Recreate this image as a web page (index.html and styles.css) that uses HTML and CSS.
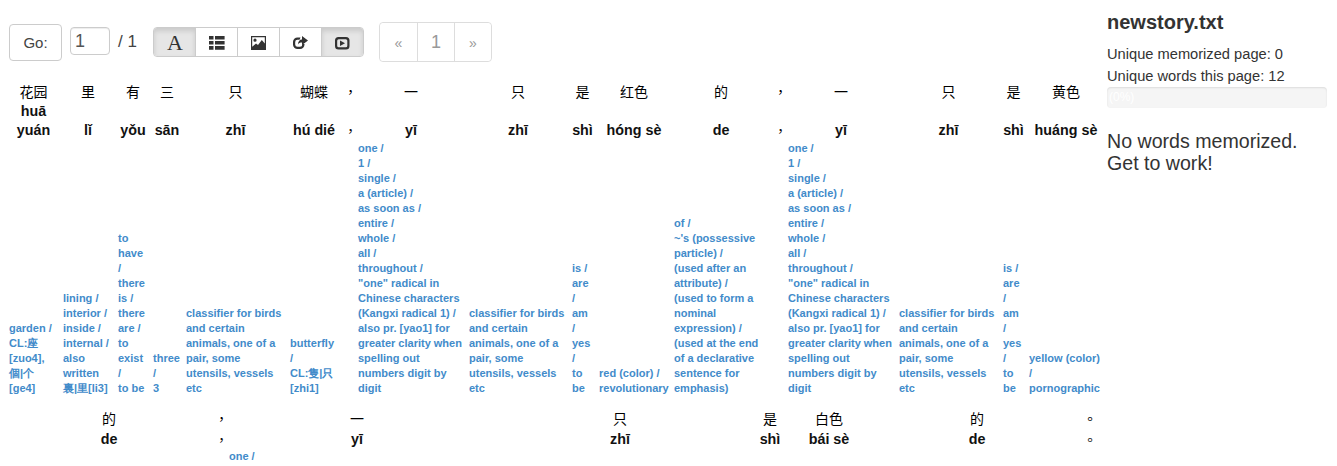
FILE: index.html
```html
<!DOCTYPE html>
<html lang="zh">
<head>
<meta charset="utf-8">
<title>newstory.txt</title>
<link rel="stylesheet" href="styles.css">
</head>
<body>
<div class="page">
<main class="main">
  <div class="toolbar">
    <button class="go">Go:</button>
    <input class="page-input" value="1">
    <span class="page-total">/ 1</span>
    <div class="btn-group">
      <button class="tool active"><svg class="ico" viewBox="0 0 20 20"><text x="10" y="18" text-anchor="middle" class="ico-a">A</text></svg></button>
      <button class="tool"><svg class="ico" viewBox="0 0 20 20"><path d="M2 4h4.500v3.500H2zM8 4h9.600v3.500H8zM2 9h4.500v3.500H2zM8 9h9.600v3.500H8zM2 14h4.500v3.700H2zM8 14h9.600v3.700H8z"/></svg></button>
      <button class="tool"><svg class="ico" viewBox="0 0 20 20"><path fill-rule="evenodd" d="M2 4h15v14H2zM3.200 5.200H15.800V11.500l-3-3.500-3.800 5-2-1.500-3.800 3.200zM6 6.600a1.600 1.600 0 1 0 0 3.200 1.600 1.600 0 0 0 0-3.200z"/></svg></button>
      <button class="tool"><svg class="ico" viewBox="0 0 20 20"><path d="M9.500 5.500H6.500A4.500 4.500 0 0 0 2 10v2.500A4.500 4.500 0 0 0 6.500 17H9a4.500 4.500 0 0 0 4.500-4.500V12h-2.200v.5A2.300 2.300 0 0 1 9 14.800H6.500a2.300 2.300 0 0 1-2.300-2.300V10a2.300 2.300 0 0 1 2.300-2.300h2z"/><path d="M11 4l6 4.500L11 13v-2.500c-2 0-3.200.5-4 2 0-3 1.500-5 4-5z"/></svg></button>
      <button class="tool active"><svg class="ico" viewBox="0 0 20 20"><path fill-rule="evenodd" d="M5.500 5h7.500a3.500 3.500 0 0 1 3.500 3.500v5.500a3.500 3.500 0 0 1-3.500 3.500H5.500A3.500 3.500 0 0 1 2 14V8.500A3.500 3.500 0 0 1 5.500 5zM5.700 7.200A1.500 1.500 0 0 0 4.200 8.700v5.100a1.500 1.500 0 0 0 1.500 1.500h7.100a1.500 1.500 0 0 0 1.500-1.500V8.700a1.500 1.500 0 0 0-1.500-1.500z"/><path d="M7 8.500l5 2.800-5 2.800z"/></svg></button>
    </div>
    <div class="pager">
      <span class="pg pg-arrow">«</span><span class="pg pg-num">1</span><span class="pg pg-arrow">»</span>
    </div>
  </div>

  <div class="line line-one">
    <div class="word w49"><div class="hz">花园</div><div class="py">huā yuán</div><div class="def">garden /<br>CL:座 [zuo4], 個|个 [ge4]</div></div>
    <div class="word w50"><div class="hz">里</div><div class="py">lǐ</div><div class="def">lining /<br>interior /<br>inside /<br>internal /<br>also written 裏|里[li3]</div></div>
    <div class="word w30"><div class="hz">有</div><div class="py">yǒu</div><div class="def">to have /<br>there is /<br>there are /<br>to exist /<br>to be</div></div>
    <div class="word w28"><div class="hz">三</div><div class="py">sān</div><div class="def">three /<br>3</div></div>
    <div class="word w99"><div class="hz">只</div><div class="py">zhī</div><div class="def">classifier for birds and certain animals, one of a pair, some utensils, vessels etc</div></div>
    <div class="word w48"><div class="hz">蝴蝶</div><div class="py">hú dié</div><div class="def">butterfly /<br>CL:隻|只 [zhi1]</div></div>
    <div class="word comma"><div class="hz">，</div><div class="py">，</div></div>
    <div class="word w106"><div class="hz">一</div><div class="py">yī</div><div class="def">one /<br>1 /<br>single /<br>a (article) /<br>as soon as /<br>entire /<br>whole /<br>all /<br>throughout /<br>"one" radical in Chinese characters (Kangxi radical 1) /<br>also pr. [yao1] for greater clarity when spelling out numbers digit by digit</div></div>
    <div class="word w98"><div class="hz">只</div><div class="py">zhī</div><div class="def">classifier for birds and certain animals, one of a pair, some utensils, vessels etc</div></div>
    <div class="word w21 wide-gap"><div class="hz">是</div><div class="py">shì</div><div class="def">is /<br>are /<br>am /<br>yes /<br>to be</div></div>
    <div class="word w70"><div class="hz">红色</div><div class="py">hóng sè</div><div class="def">red (color) /<br>revolutionary</div></div>
    <div class="word w94"><div class="hz">的</div><div class="py">de</div><div class="def">of /<br>~'s (possessive particle) /<br>(used after an attribute) /<br>(used to form a nominal expression) /<br>(used at the end of a declarative sentence for emphasis)</div></div>
    <div class="word comma"><div class="hz">，</div><div class="py">，</div></div>
    <div class="word w106"><div class="hz">一</div><div class="py">yī</div><div class="def">one /<br>1 /<br>single /<br>a (article) /<br>as soon as /<br>entire /<br>whole /<br>all /<br>throughout /<br>"one" radical in Chinese characters (Kangxi radical 1) /<br>also pr. [yao1] for greater clarity when spelling out numbers digit by digit</div></div>
    <div class="word w99"><div class="hz">只</div><div class="py">zhī</div><div class="def">classifier for birds and certain animals, one of a pair, some utensils, vessels etc</div></div>
    <div class="word w21"><div class="hz">是</div><div class="py">shì</div><div class="def">is /<br>are /<br>am /<br>yes /<br>to be</div></div>
    <div class="word w74"><div class="hz">黄色</div><div class="py">huáng sè</div><div class="def">yellow (color) /<br>pornographic</div></div>
  </div>

  <div class="line line-two">
    <div class="word w200"><div class="hz">的</div><div class="py">de</div><div class="def">of /<br>~'s (possessive particle) /<br>(used after an attribute) /<br>(used to form a nominal expression) /<br>(used at the end of a declarative sentence for emphasis)</div></div>
    <div class="word comma"><div class="hz">，</div><div class="py">，</div></div>
    <div class="word w256"><div class="hz">一</div><div class="py">yī</div><div class="def">one /<br>1 /<br>single /<br>a (article) /<br>as soon as /<br>entire /<br>whole /<br>all /<br>throughout /<br>"one" radical in Chinese characters (Kangxi radical 1) /<br>also pr. [yao1] for greater clarity when spelling out numbers digit by digit</div></div>
    <div class="word w260"><div class="hz">只</div><div class="py">zhī</div><div class="def">classifier for birds and certain animals, one of a pair, some utensils, vessels etc</div></div>
    <div class="word w30"><div class="hz">是</div><div class="py">shì</div><div class="def">is /<br>are /<br>am /<br>yes /<br>to be</div></div>
    <div class="word w78"><div class="hz">白色</div><div class="py">bái sè</div><div class="def">white</div></div>
    <div class="word w208"><div class="hz">的</div><div class="py">de</div><div class="def">of /<br>~'s (possessive particle) /<br>(used after an attribute) /<br>(used to form a nominal expression) /<br>(used at the end of a declarative sentence for emphasis)</div></div>
    <div class="word comma end-mark"><div class="hz">。</div><div class="py">。</div></div>
  </div>
</main>

<aside class="side">
  <h3 class="title">newstory.txt</h3>
  <p class="stat">Unique memorized page: 0</p>
  <p class="stat">Unique words this page: 12</p>
  <div class="progress"><span class="progress-label">(0%)</span></div>
  <p class="status">No words memorized.<br>Get to work!</p>
</aside>
</div>
</body>
</html>
```

FILE: styles.css
```css
* { box-sizing: border-box; }
html, body { margin: 0; padding: 0; height: 466px; overflow: hidden; background: #fff; }
body { font-family: "Liberation Sans", Arial, sans-serif; font-size: 14px; line-height: 20px; color: #333; }
.page { display: flex; align-items: flex-start; padding-left: 9px; }
.main { width: 1098px; flex: none; }
.side { width: 220px; flex: none; }

.toolbar { display: flex; align-items: center; height: 40px; margin-top: 22px; }
.go { width: 53px; height: 37px; padding: 0; background: #fff; border: 1px solid #ccc; border-radius: 4px; font: 15px "Liberation Sans", sans-serif; color: #444; }
.page-input { width: 40px; height: 28px; margin: 0 0 2px 8px; padding: 0 4px; border: 1px solid #ccc; border-radius: 4px; font: 18px "Liberation Sans", sans-serif; color: #555; box-shadow: inset 0 1px 1px rgba(0,0,0,.075); }
.page-total { width: 43px; padding-left: 8px; font-size: 17px; color: #444; }
.btn-group { display: flex; height: 30px; width: 211px; border: 1px solid #ccc; border-radius: 4px; overflow: hidden; }
.tool { flex: 1; padding: 0; background: #fff; border: 0; border-left: 1px solid #ccc; display: flex; align-items: center; justify-content: center; }
.tool:first-child { border-left: 0; }
.tool.active { background: #e6e6e6; box-shadow: inset 0 3px 5px rgba(0,0,0,.125); }
.ico { width: 20px; height: 20px; fill: #333; overflow: visible; }
.ico-a { font: 22px "Liberation Serif", serif; }
.pager { display: flex; height: 40px; margin-left: 15px; border: 1px solid #ddd; border-radius: 4px; }
.pg { display: flex; align-items: center; justify-content: center; color: #999; background: #fff; border-radius: 4px; }
.pg-arrow { width: 37px; font-size: 14px; padding-top: 1px; }
.pg-arrow:last-child { width: 36px; }
.pg-num { width: 38px; font-size: 18px; border-left: 1px solid #ddd; border-right: 1px solid #ddd; border-radius: 0; }

.line { display: flex; align-items: stretch; }
.line-one { margin-top: 19px; margin-bottom: 12px; }
.word { display: flex; flex-direction: column; flex: none; margin-right: 5px; text-align: center; }
.wide-gap { margin-right: 6px; }
.hz { font-family: "Noto Sans CJK SC", sans-serif; font-size: 14px; line-height: 20px; color: #000; }
.py { font-weight: 700; font-size: 14.3px; line-height: 19px; color: #111; }
.line-one .py { display: flex; align-items: flex-end; justify-content: center; height: 40px; padding-bottom: 1px; }
.line-two .py { margin-top: 2px; }
.def { margin-top: auto; font-size: 11px; line-height: 15px; font-weight: 700; color: #428bca; text-align: left; }
.comma { width: 15px; margin-right: 0; }
.comma .hz, .comma .py { font-family: "Noto Sans CJK TC", sans-serif; font-size: 14px; font-weight: 400; }
.end-mark { width: 8px; margin-left: -3px; }

.w21 { width: 21px; } .w28 { width: 28px; } .w30 { width: 30px; }
.w48 { width: 48px; } .w49 { width: 49px; } .w50 { width: 50px; } .w70 { width: 70px; }
.w74 { width: 74px; } .w78 { width: 78px; } .w94 { width: 94px; } .w98 { width: 98px; }
.w99 { width: 99px; } .w106 { width: 106px; } .w200 { width: 200px; } .w208 { width: 208px; }
.w256 { width: 256px; } .w260 { width: 260px; }

.title { margin: 11px 0 0; font-size: 20px; line-height: 22px; font-weight: 700; color: #333; }
.stat { margin: 0; font-size: 14.67px; line-height: 22px; color: #333; }
.title + .stat { margin-top: 10px; }
.progress { height: 21px; background: #f5f5f5; border-radius: 4px; box-shadow: inset 0 1px 2px rgba(0,0,0,.1); }
.progress-label { display: block; padding-left: 2px; font-size: 12px; line-height: 20px; color: #fff; }
.status { margin: 22px 0 0; font-size: 19.6px; line-height: 22px; color: #333; }
```
